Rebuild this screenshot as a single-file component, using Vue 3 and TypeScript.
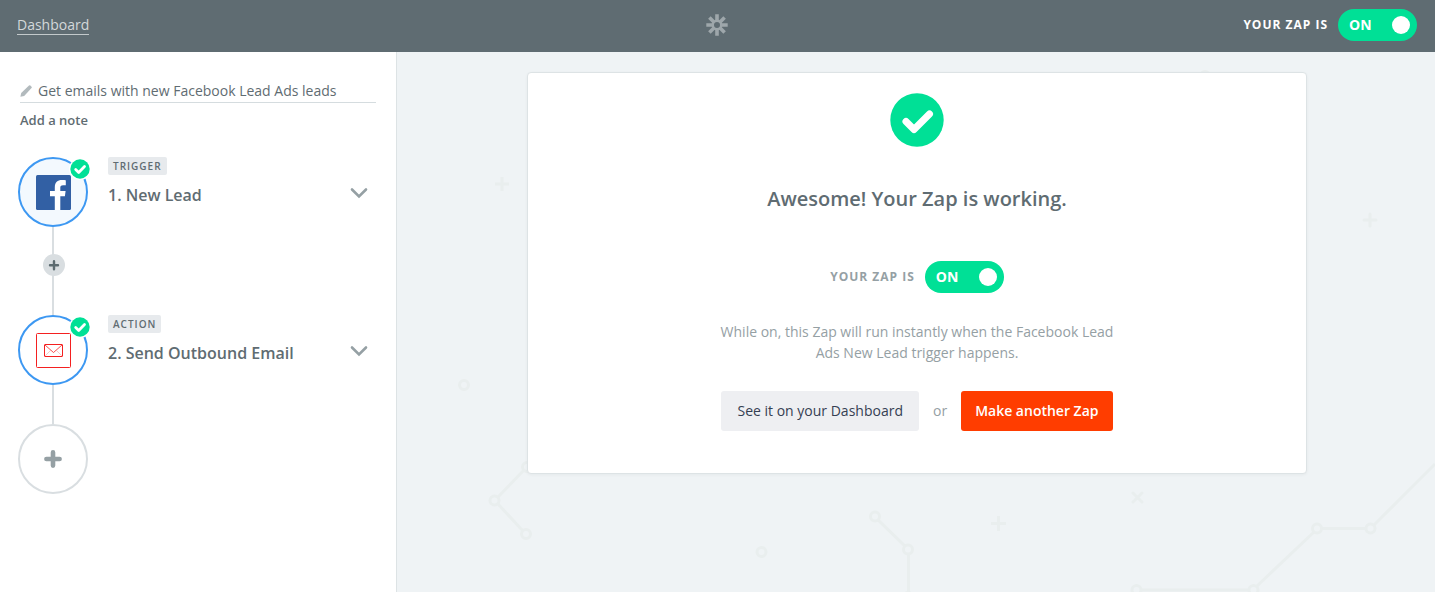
<script setup lang="ts">
import { ref } from 'vue'

interface Step {
  id: number
  kind: string
  title: string
  app: 'facebook' | 'email'
}

const zapName = ref<string>('Get emails with new Facebook Lead Ads leads')
const zapOn = ref<boolean>(true)

const steps: Step[] = [
  { id: 1, kind: 'TRIGGER', title: '1. New Lead', app: 'facebook' },
  { id: 2, kind: 'ACTION', title: '2. Send Outbound Email', app: 'email' },
]
</script>

<template>
  <div class="page">
    <header class="topbar">
      <a class="topbar-link" href="#dashboard">Dashboard</a>
      <svg class="logo" viewBox="0 0 22 22" aria-hidden="true">
        <g stroke="currentColor" stroke-width="3.6" fill="none">
          <path d="M11 0.3v7M11 14.7v7M0.3 11h7M14.7 11h7" />
          <path d="M3.4 3.4l5 5M13.6 13.6l5 5M18.6 3.4l-5 5M8.4 13.6l-5 5" />
          <circle cx="11" cy="11" r="4.2" stroke-width="2.4" />
        </g>
      </svg>
      <label class="switch-row">
        <span class="switch-label">YOUR ZAP IS</span>
        <span class="switch" :class="{ off: !zapOn }">
          <input v-model="zapOn" class="switch-input" type="checkbox" />
          <span class="switch-state">{{ zapOn ? 'ON' : 'OFF' }}</span>
          <span class="knob"></span>
        </span>
      </label>
    </header>

    <div class="body">
      <aside class="sidebar">
        <div class="name-row">
          <svg class="pencil" viewBox="0 0 12 12" aria-hidden="true">
            <path d="M0.4 11.8l0.8-3.8 7.800-7.400q0.700-0.600 1.400 0l1.100 1.100q0.600 0.700 0 1.400l-7.300 7.900z" fill="currentColor" />
          </svg>
          <input v-model="zapName" class="name-input" type="text" aria-label="Zap name" />
        </div>
        <button class="note" type="button">Add a note</button>

        <ol class="steps">
          <li v-for="(step, index) in steps" :key="step.id">
            <div class="step">
              <div class="step-icon" :class="step.app">
                <svg v-if="step.app === 'facebook'" class="app-icon" viewBox="0 0 35 35" aria-hidden="true">
                  <rect width="35" height="35" rx="1.5" fill="#3260a4" />
                  <path
                    d="M18.8 35V21.2H14v-5.3h4.8v-3.7c0-4.8 2.8-7.1 7.1-7.1 2 0 3.3.1 3.9.2v4.9h-2.7c-2.3 0-2.8 1.1-2.8 2.7v3h5.3l-.7 5.3h-4.6V35z"
                    fill="#fff"
                  />
                </svg>
                <svg v-else class="app-icon" viewBox="0 0 35 35" aria-hidden="true">
                  <g fill="none" stroke="#f42020">
                    <rect x="0.5" y="0.5" width="34" height="34" rx="1" />
                    <rect x="8.5" y="11.5" width="18" height="12" rx="0.5" />
                    <path d="M9 12l8.5 7.5L26 12" stroke-opacity="0.8" />
                    <path d="M9 23l5.500-5.500M26 23l-5.500-5.500" stroke-opacity="0.25" />
                  </g>
                </svg>
                <svg class="step-check" viewBox="0 0 22 22" aria-hidden="true">
                  <circle cx="11" cy="11" r="11" fill="#fff" />
                  <circle cx="11" cy="11" r="9.7" fill="#00e096" />
                  <path d="M6.7 11.5l3 2.9 5.8-5.8" fill="none" stroke="#fff" stroke-width="2.8" stroke-linecap="round" stroke-linejoin="round" />
                </svg>
              </div>
              <div class="step-text">
                <span class="tag">{{ step.kind }}</span>
                <h2 class="step-title">{{ step.title }}</h2>
              </div>
              <button class="expand" type="button" :aria-label="`Expand ${step.title}`">
                <svg viewBox="0 0 18 12" aria-hidden="true">
                  <path d="M2 2.500l7 7 7-7" fill="none" stroke="#95a0a4" stroke-width="2.6" stroke-linecap="round" />
                </svg>
              </button>
            </div>
            <div class="connector" :class="{ short: index === steps.length - 1 }">
              <button v-if="index < steps.length - 1" class="insert" type="button" aria-label="Insert a step">
                <svg viewBox="0 0 22 22" aria-hidden="true">
                  <path d="M11 7.200v8M7 11.200h8" stroke="#5c6b70" stroke-width="2.4" stroke-linecap="round" />
                </svg>
              </button>
            </div>
          </li>
          <li>
            <button class="add-step" type="button" aria-label="Add a step">
              <svg viewBox="0 0 18 18" aria-hidden="true">
                <path d="M9 2.4v13.2M2.4 9h13.2" stroke="#95a0a4" stroke-width="4.6" stroke-linecap="round" />
              </svg>
            </button>
          </li>
        </ol>
      </aside>

      <main class="content">
        <svg class="pattern" viewBox="0 0 1038 540" preserveAspectRatio="xMinYMin slice" aria-hidden="true">
          <g fill="none" stroke="#e9eeee" stroke-width="3">
            <path d="M127 418L101 445M101 452L126 479" />
            <path d="M481 468L508 494M511.500 502V540" />
            <path d="M744 538H852M860 534L917 480M925 476.500H969M977 473L1038 412" />
            <path d="M601.500 464v15M594 471.500h15M105 125v14M98 132h14" />
            <path d="M973 162v12M967 168h12M736 441l9 9M745 441l-9 9" stroke-linecap="round" />
            <circle cx="67" cy="333" r="4.500" />
            <circle cx="130" cy="415" r="4.500" />
            <circle cx="97.500" cy="448.500" r="4.500" />
            <circle cx="129" cy="482" r="4.500" />
            <circle cx="364.500" cy="500" r="4.500" />
            <circle cx="478" cy="464.500" r="4.500" />
            <circle cx="511" cy="497.500" r="4.500" />
            <circle cx="511" cy="545" r="4.500" />
            <circle cx="739.500" cy="538" r="4.500" />
            <circle cx="856.500" cy="538" r="4.500" />
            <circle cx="920" cy="476.500" r="4.500" />
            <circle cx="973.500" cy="476.500" r="4.500" />
            <circle cx="808" cy="24" r="4.500" />
          </g>
        </svg>

        <section class="card">
          <svg class="big-check" viewBox="0 0 54 54" aria-hidden="true">
            <circle cx="27" cy="27" r="26.700" fill="#00e096" />
            <path d="M16 28.500l8 8L39.500 21" fill="none" stroke="#fff" stroke-width="7" stroke-linecap="round" stroke-linejoin="round" />
          </svg>
          <h1 class="headline">Awesome! Your Zap is working.</h1>
          <label class="switch-row muted">
            <span class="switch-label">YOUR ZAP IS</span>
            <span class="switch" :class="{ off: !zapOn }">
              <input v-model="zapOn" class="switch-input" type="checkbox" />
              <span class="switch-state">{{ zapOn ? 'ON' : 'OFF' }}</span>
              <span class="knob"></span>
            </span>
          </label>
          <p class="summary">While on, this Zap will run instantly when the Facebook Lead Ads New Lead trigger happens.</p>
          <div class="actions">
            <button class="btn" type="button">See it on your Dashboard</button>
            <span class="or">or</span>
            <button class="btn primary" type="button">Make another Zap</button>
          </div>
        </section>
      </main>
    </div>
  </div>
</template>

<style>
body {
  margin: 0;
}
</style>

<style scoped>
.page {
  display: flex;
  flex-direction: column;
  min-height: 100vh;
  font-family: 'Open Sans', 'Noto Sans', sans-serif;
  font-size: 14px;
  line-height: 21px;
  color: #5f6c72;
}

.page *,
.page {
  box-sizing: border-box;
}

button {
  padding: 0;
  border: 0;
  background: none;
  font: inherit;
  color: inherit;
  cursor: pointer;
}

svg {
  display: block;
}

.topbar {
  display: grid;
  grid-template-columns: 1fr auto 1fr;
  align-items: center;
  height: 52px;
  padding: 0 18px 2px 17px;
  background: #5f6c72;
}

.topbar-link {
  justify-self: start;
  border-bottom: 1px solid #c3c9cb;
  line-height: 19px;
  color: #d3d8da;
  text-decoration: none;
}

.logo {
  width: 22px;
  height: 22px;
  color: #9ea7ab;
}

.switch-row {
  display: flex;
  align-items: center;
  justify-self: end;
  gap: 10px;
  color: #fff;
  cursor: pointer;
}

.switch-label {
  padding-bottom: 2px;
  font-size: 12px;
  font-weight: 700;
  letter-spacing: 1px;
}

.muted {
  color: #95a0a4;
}

.switch {
  position: relative;
  display: flex;
  align-items: center;
  justify-content: space-between;
  width: 79px;
  height: 32px;
  padding: 0 7px 0 11px;
  border-radius: 16px;
  background: #00e096;
  color: #fff;
  font-weight: 700;
}

.switch.off {
  flex-direction: row-reverse;
  background: #95a0a4;
}

.switch-state {
  padding-bottom: 2px;
}

.switch-input {
  position: absolute;
  inset: 0;
  margin: 0;
  opacity: 0;
  cursor: pointer;
}

.knob {
  width: 18px;
  height: 18px;
  border-radius: 50%;
  background: #fff;
}

.body {
  display: flex;
  flex: 1;
}

.sidebar {
  flex: none;
  width: 397px;
  padding: 27px 20px 20px;
  border-right: 1px solid #dde3e5;
  background: #fff;
}

.name-row {
  display: flex;
  align-items: center;
  gap: 6px;
  height: 24px;
  border-bottom: 1px solid #d5dcdf;
}

.pencil {
  flex: none;
  width: 12px;
  height: 12px;
  color: #b2babd;
}

.name-input {
  flex: 1;
  min-width: 0;
  padding: 0;
  border: 0;
  background: none;
  font: inherit;
  color: inherit;
}

.note {
  display: block;
  margin-top: 7px;
  font-size: 13px;
  font-weight: 600;
}

.steps {
  margin: 26px 0 0;
  padding: 0;
  list-style: none;
}

.step {
  display: flex;
  align-items: flex-start;
}

.step-icon,
.add-step {
  display: grid;
  place-items: center;
  flex: none;
  width: 70px;
  height: 70px;
  margin-left: -2px;
  border: 2px solid #3d98f2;
  border-radius: 50%;
}

.step-icon {
  position: relative;
}

.facebook {
  background: #f3f9fe;
}

.app-icon {
  width: 35px;
  height: 35px;
}

.step-check {
  position: absolute;
  top: -1px;
  right: -5px;
  width: 22px;
  height: 22px;
}

.step-text {
  flex: 1;
  margin-left: 20px;
}

.tag {
  display: block;
  width: fit-content;
  padding: 0 5px;
  border-radius: 2px;
  background: #e7eaed;
  font-size: 10px;
  font-weight: 600;
  line-height: 18px;
  letter-spacing: 1px;
}

.step-title {
  margin: 8px 0 0;
  font-size: 16px;
  font-weight: 600;
  line-height: 24px;
}

.expand {
  width: 18px;
  height: 12px;
  margin: 30px 8px 0 0;
}

.connector {
  display: grid;
  place-items: center;
  width: 66px;
  height: 88px;
  background: linear-gradient(#d9dee1, #d9dee1) center / 2px 100% no-repeat;
}

.connector.short {
  height: 39px;
}

.insert {
  width: 22px;
  height: 22px;
  margin: 0 0 12px 2px;
  border-radius: 50%;
  background: #d9dee1;
}

.add-step {
  border-color: #d9dee1;
}

.add-step svg {
  width: 18px;
  height: 18px;
}

.content {
  position: relative;
  flex: 1;
  min-width: 0;
  padding: 20px 20px 20px 22px;
  background: #eff3f5;
}

.pattern {
  position: absolute;
  inset: 0;
  width: 100%;
  height: 100%;
}

.card {
  position: relative;
  display: flex;
  flex-direction: column;
  align-items: center;
  max-width: 780px;
  margin: 0 auto;
  padding: 20px 20px 42px;
  border: 1px solid #dde3e5;
  border-radius: 4px;
  background: #fff;
  box-shadow: 0 1px 3px rgba(60, 80, 90, 0.06);
}

.big-check {
  width: 54px;
  height: 54px;
}

.headline {
  margin: 36px 0 46px;
  font-size: 20px;
  font-weight: 600;
  line-height: 32px;
}

.summary {
  max-width: 400px;
  margin: 28px 0;
  text-align: center;
  color: #95a0a4;
}

.actions {
  display: flex;
  align-items: center;
  gap: 14px;
  color: #95a0a4;
}

.or {
  padding-bottom: 2px;
}

.btn {
  height: 40px;
  padding: 0 16px 2px;
  border-radius: 3px;
  background: #eeeff2;
  color: #354052;
}

.primary {
  padding: 0 14px 2px;
  background: #ff3d00;
  color: #fff;
  font-weight: 600;
}
</style>
